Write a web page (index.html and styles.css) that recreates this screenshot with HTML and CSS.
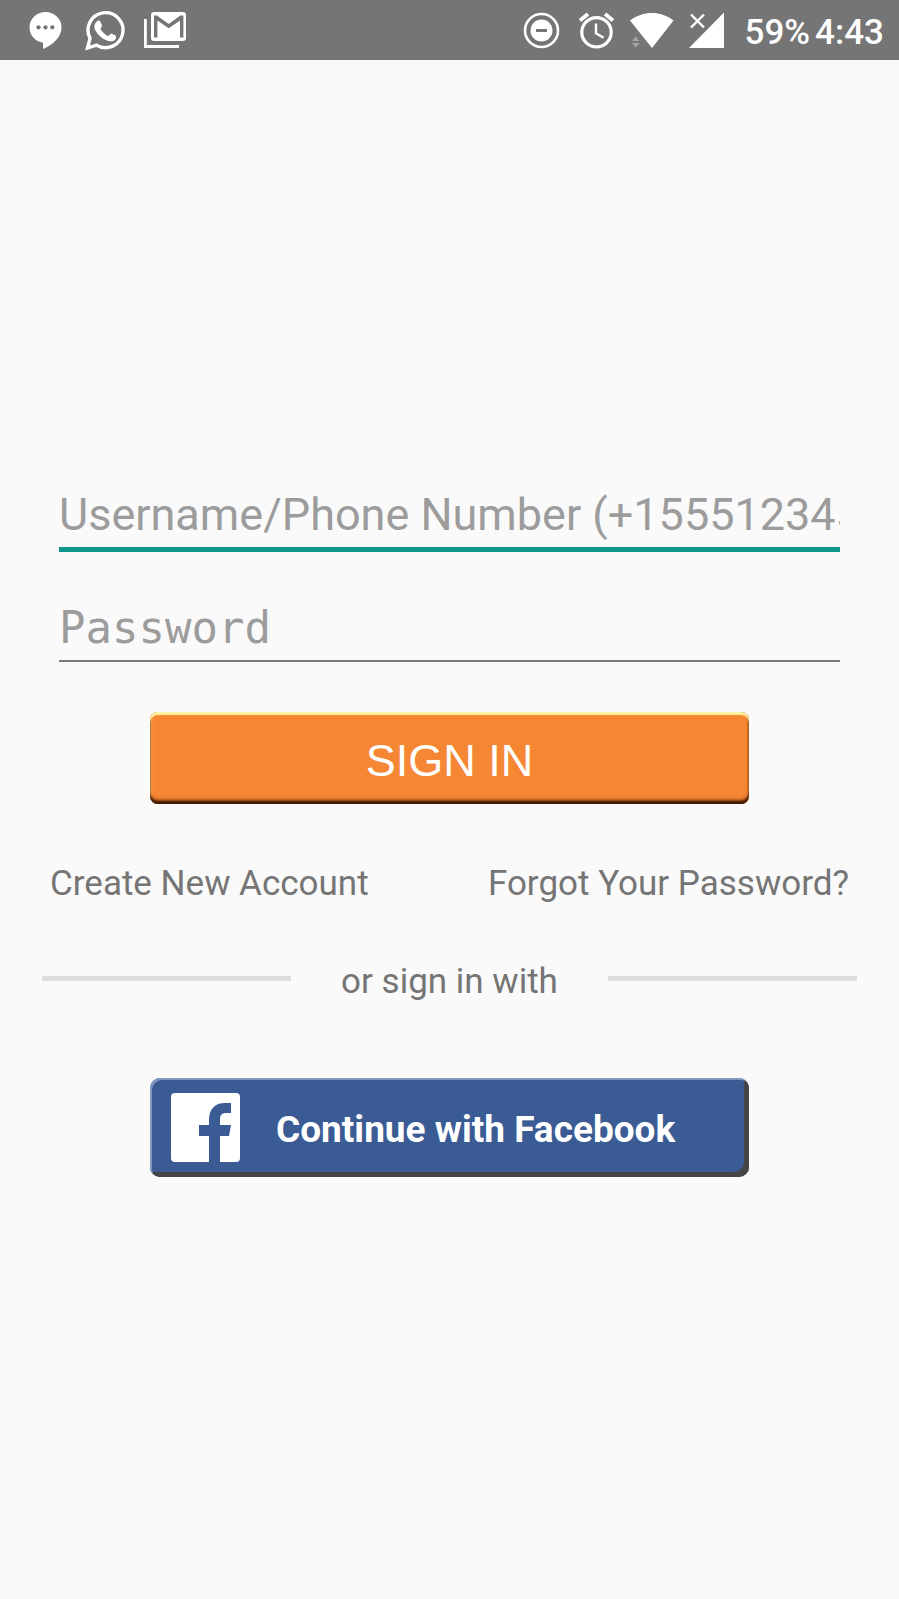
FILE: index.html
```html
<!DOCTYPE html>
<html lang="en">
<head>
<meta charset="utf-8">
<meta name="viewport" content="width=device-width, initial-scale=1">
<title>Sign In</title>
<link rel="stylesheet" href="styles.css">
</head>
<body>
<header class="status">
  <div class="notifications">
    <svg class="icon" viewBox="22 6 48 48" aria-hidden="true"><path fill="#fff" d="M45.500 12a16 15.500 0 0 1 16 15.500c0 9.500-8.500 17.500-18.500 21.500v-6.200a16 15.500 0 0 1-13.500-15.300A16 15.500 0 0 1 45.500 12z"/><g fill="#757575"><circle cx="38.500" cy="27.300" r="2.100"/><circle cx="45.500" cy="27.300" r="2.100"/><circle cx="52.300" cy="27.300" r="2.100"/></g></svg>
    <svg class="icon" viewBox="81 6 48 48" aria-hidden="true"><path fill="none" stroke="#fff" stroke-width="3.400" d="M87.500 48l2.600-9.600a17.500 17.500 0 1 1 6.500 6.800z"/><path fill="#fff" d="M97 21.200c.8-.8 2.700-.9 3.200.1l1.800 4.300c.3.900-1.700 2.800-1.500 3.500 1.700 3.200 4.300 5.400 7.600 6.900.8.200 2.300-2.800 3.200-2.500l4.300 2.100c1 .6.300 3.300-.5 4.100-2.200 2-5 1.900-7.500 1-5.700-2-9.900-5.700-12.500-10.800-1.600-3.200-.8-6.300 1.900-8.700z"/></svg>
    <svg class="icon" viewBox="140 6 48 48" aria-hidden="true"><path fill="none" stroke="#fff" stroke-width="2.800" d="M145.400 19v27.500H179"/><rect x="151" y="12" width="35" height="29" rx="3" fill="#fff"/><path fill="#757575" d="M154 37.500V15.500h3l11.700 8.500 11.700-8.500h3v22h-3.400V20.500l-11.300 7.800-11.300-7.800v17z"/></svg>
  </div>
  <div class="system">
    <svg class="icon" viewBox="518 6 48 48" aria-hidden="true"><circle cx="541.500" cy="30.500" r="16.500" fill="none" stroke="#fff" stroke-width="2.600"/><circle cx="541.500" cy="30.500" r="11" fill="#fff"/><path stroke="#757575" stroke-width="3" d="M536 30.500h11"/></svg>
    <svg class="icon" viewBox="572 6 48 48" aria-hidden="true"><g fill="none" stroke="#fff"><circle cx="595.500" cy="32.300" r="14.700" stroke-width="3.200"/><path stroke-width="2.400" d="M595 23.500v9.700l7.600 4.600"/><path stroke-width="3.800" d="M579 20.500l8-6.500M612 20.500l-8-6.500"/></g></svg>
    <svg class="icon" viewBox="628 6 48 48" aria-hidden="true"><path fill="#fff" d="M630 20.500c13-10 31-10 43.500 0L652 48z"/><path fill="#a5a5a5" d="M632 41l3.700-4.500 3.700 4.500zM632 43l3.700 4.500 3.700-4.500z"/></svg>
    <svg class="icon" viewBox="682 6 48 48" aria-hidden="true"><path fill="#fff" d="M723 12.500V48h-35z"/><path fill="none" stroke="#fff" stroke-width="2.400" d="M690 14.500l13 13M703 14.500l-13 13"/></svg>
    <div class="readings">
      <span>59%</span>
      <time>4:43</time>
    </div>
  </div>
</header>
<main class="screen">
  <form class="login">
    <input class="field active" type="text" aria-label="Username or phone number" placeholder="Username/Phone Number (+15551234567)">
    <input class="field secret" type="password" aria-label="Password" placeholder="Password">
    <button class="signin" type="button">SIGN IN</button>
  </form>
  <nav class="links">
    <a href="#create">Create New Account</a>
    <a href="#forgot">Forgot Your Password?</a>
  </nav>
  <div class="divider"><span>or sign in with</span></div>
  <button class="facebook" type="button">
    <svg class="fb-logo" viewBox="0 0 69 69" aria-hidden="true"><rect width="69" height="69" rx="4" fill="#fff"/><path fill="#3b5b95" d="M38 69V43H28V32h10v-5c0-11 6-17 16-17h6v10h-5c-4 0-6 2-6 6v6h11l-2 11h-9v26z"/></svg>
    <span>Continue with Facebook</span>
  </button>
</main>
</body>
</html>
```
FILE: styles.css
```css
* {
  box-sizing: border-box;
}

body {
  margin: 0;
  background: #fafafa;
  color: #757575;
  font-family: Roboto, "Noto Sans", sans-serif;
}

.status {
  display: flex;
  justify-content: space-between;
  align-items: center;
  height: 60px;
  padding: 0 15px 0 22px;
  background: #757575;
  color: #fff;
  font-size: 35px;
  font-weight: 500;
}

.notifications,
.system,
.readings {
  display: flex;
  align-items: center;
}

.notifications {
  gap: 11px;
}

.system {
  gap: 7px;
}

.icon {
  width: 48px;
  height: 48px;
}

.readings {
  gap: 5px;
  padding: 4px 0 0 7px;
}

.screen {
  display: flex;
  flex-direction: column;
  align-items: center;
  padding: 418px 42px 0;
}

.login {
  display: flex;
  flex-direction: column;
  align-items: center;
  width: 100%;
  padding: 0 17px;
}

.field {
  width: 100%;
  height: 74px;
  padding: 4px 0 0;
  border: 0;
  border-radius: 0;
  border-bottom: 2px solid #7c7c7c;
  outline: 0;
  background: transparent;
  color: #212121;
  font-family: inherit;
  font-size: 45px;
}

.field.active {
  border-bottom: 5px solid #0c9586;
}

.field.secret {
  margin-top: 36px;
  padding-top: 6px;
  font-family: "DejaVu Sans Mono", monospace;
  font-size: 44px;
}

.field::placeholder {
  color: #9c9c9c;
  opacity: 1;
}

.signin,
.facebook {
  border: 0;
  color: #fff;
}

.signin {
  width: 76.700%;
  height: 92px;
  margin-top: 50px;
  padding: 6px 0 0;
  border-radius: 8px;
  background: #f58634;
  box-shadow:
    inset 0 3px 1px #fff3a0,
    inset 0 -3px 2px #3c1a00,
    inset 0 -5px 3px #b25a1a,
    inset 2px 0 2px #ffac66,
    inset -1px 0 2px #b86020;
  font-family: "Liberation Sans", Arial, sans-serif;
  font-size: 45px;
}

.links {
  display: flex;
  justify-content: space-between;
  width: 100%;
  margin-top: 59px;
  padding: 0 8px;
  font-size: 35px;
  line-height: 42px;
}

.links a {
  color: inherit;
  text-decoration: none;
}

.divider {
  display: flex;
  align-items: center;
  gap: 50px;
  width: 100%;
  margin-top: 49px;
  font-size: 35px;
  line-height: 42px;
}

.divider span {
  padding-top: 7px;
}

.divider::before,
.divider::after {
  content: "";
  flex: 1;
  height: 5px;
  background: #ddd;
}

.facebook {
  display: flex;
  align-items: center;
  gap: 36px;
  width: 73.500%;
  height: 99px;
  margin-top: 75px;
  padding: 0 21px;
  border-radius: 10px;
  background: #3b5b95;
  box-shadow:
    inset 2px 2px 0 #8398bf,
    inset -5px -5px 0 #454545;
  font-family: inherit;
  font-size: 37px;
  font-weight: 700;
}

.facebook span {
  padding-top: 3px;
}

.fb-logo {
  width: 69px;
  height: 69px;
}
```
